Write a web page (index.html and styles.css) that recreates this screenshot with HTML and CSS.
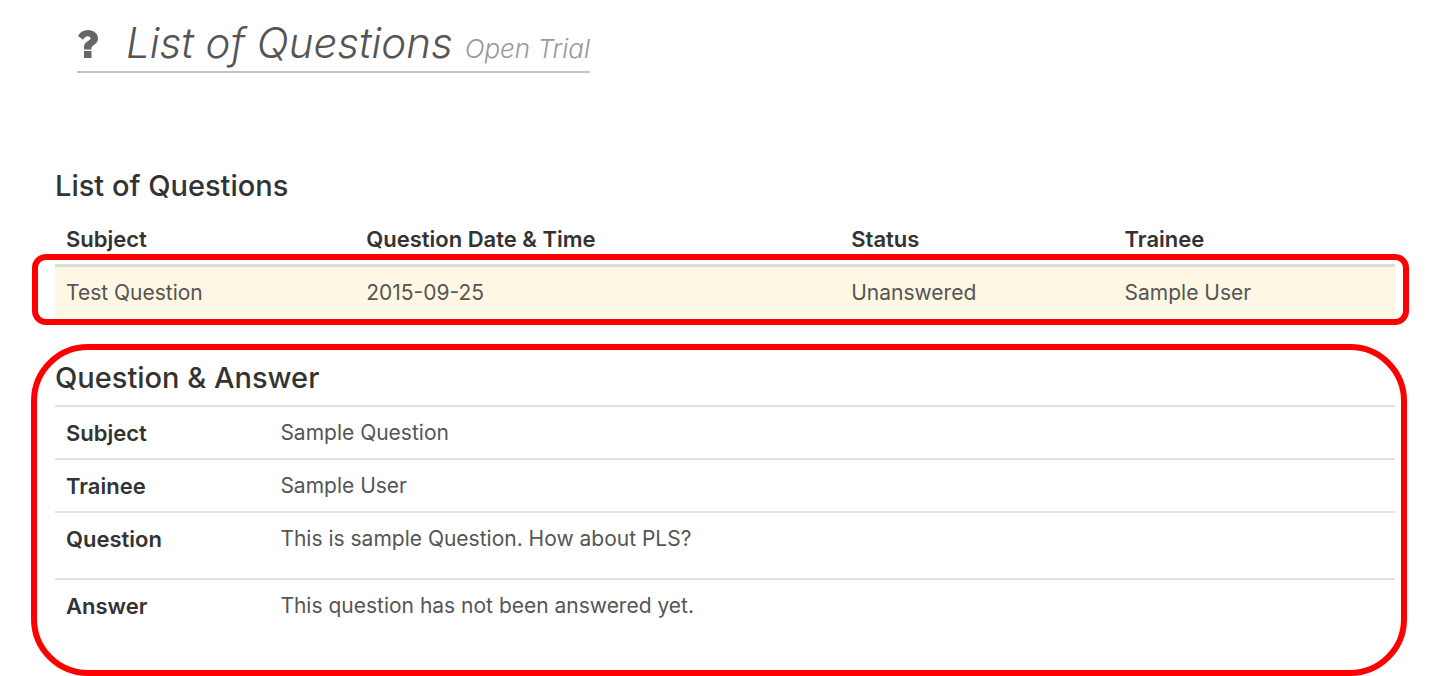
FILE: index.html
```html
<!DOCTYPE html>
<html lang="en">
<head>
<meta charset="utf-8">
<title>List of Questions</title>
<link rel="stylesheet" href="styles.css">
</head>
<body>
<header class="page-header">
  <h1 class="page-title">
    <svg class="title-icon" viewBox="0 0 20 28" aria-hidden="true"><path d="M6 21h7.500v7H6zM0 6C2 2 5.500 0 10 0c5.500 0 10 3.500 10 8.500 0 3.500-2 5.200-4.500 6.800-1.500 1-2 1.700-2 3.200v1H6V17c0-3 1.500-4.500 4-6 1.700-1 2.500-1.500 2.500-2.700C12.500 7 11.300 6.300 9.800 6.300 8 6.300 6.500 7.500 5 9.800z"/></svg>
    <span>List of Questions</span>
    <small class="subtitle">Open Trial</small>
  </h1>
</header>
<main>
  <section class="question-list">
    <h2>List of Questions</h2>
    <table class="grid list-grid">
      <colgroup><col class="col-subject"><col class="col-date"><col class="col-status"><col></colgroup>
      <thead>
        <tr><th scope="col">Subject</th><th scope="col">Question Date &amp; Time</th><th scope="col">Status</th><th scope="col">Trainee</th></tr>
      </thead>
      <tbody>
        <tr class="selected"><td>Test Question</td><td>2015-09-25</td><td>Unanswered</td><td>Sample User</td></tr>
      </tbody>
    </table>
  </section>
  <section class="detail">
    <h2>Question &amp; Answer</h2>
    <table class="grid detail-grid">
      <colgroup><col class="col-label"><col></colgroup>
      <tbody>
        <tr><th scope="row">Subject</th><td>Sample Question</td></tr>
        <tr><th scope="row">Trainee</th><td>Sample User</td></tr>
        <tr class="long"><th scope="row">Question</th><td>This is sample Question. How about PLS?</td></tr>
        <tr class="long"><th scope="row">Answer</th><td>This question has not been answered yet.</td></tr>
      </tbody>
    </table>
  </section>
</main>
</body>
</html>
```
FILE: styles.css
```css
* { box-sizing: border-box; }
body {
  margin: 0;
  background: #fff;
  color: #555;
  font: 21px/32px Inter, "Liberation Sans", sans-serif;
}
.page-header { display: flex; padding: 14px 77px 0; }
.page-title {
  display: flex;
  align-items: baseline;
  margin: 0;
  border-bottom: 2px solid #c4c4c4;
  font-size: 42px;
  font-style: italic;
  font-weight: 300;
  line-height: 57px;
  color: #555;
}
.title-icon { width: 20px; height: 28px; margin: 0 28px 0 1px; fill: #666; }
.subtitle { margin-left: 12px; font-size: 26px; line-height: 32px; color: #999; }
h2 {
  margin: 0 0 7px;
  font-size: 29px;
  font-weight: 500;
  line-height: 40px;
  color: #333;
}
.question-list { padding: 93px 46px 0 55px; }
.grid { width: 100%; table-layout: fixed; border-collapse: separate; border-spacing: 0; }
.grid th, .grid td { padding: 10px 11px 9px; text-align: left; vertical-align: top; }
.grid th { font-size: 22px; font-weight: 600; color: #333; }
.list-grid thead th { border-bottom: 3px solid #dcdcdc; }
.col-subject { width: 22.4%; }
.col-date { width: 36.2%; }
.col-status { width: 20.4%; }
.selected { position: relative; }
.selected td { background: #fdf7e3; }
.selected td:first-child::after {
  content: "";
  position: absolute;
  inset: -13px -14px -7px -23px;
  border: 6px solid #f00;
  border-radius: 14px;
}
.detail {
  margin: 26px 34px 0 31px;
  padding: 8px 6px 25px 18px;
  border: 6px solid #f00;
  border-radius: 57px;
}
.col-label { width: 16%; }
.detail-grid th, .detail-grid td { border-top: 2px solid #e0e0e0; }
.detail-grid .long > * { padding-bottom: 23px; }
```
